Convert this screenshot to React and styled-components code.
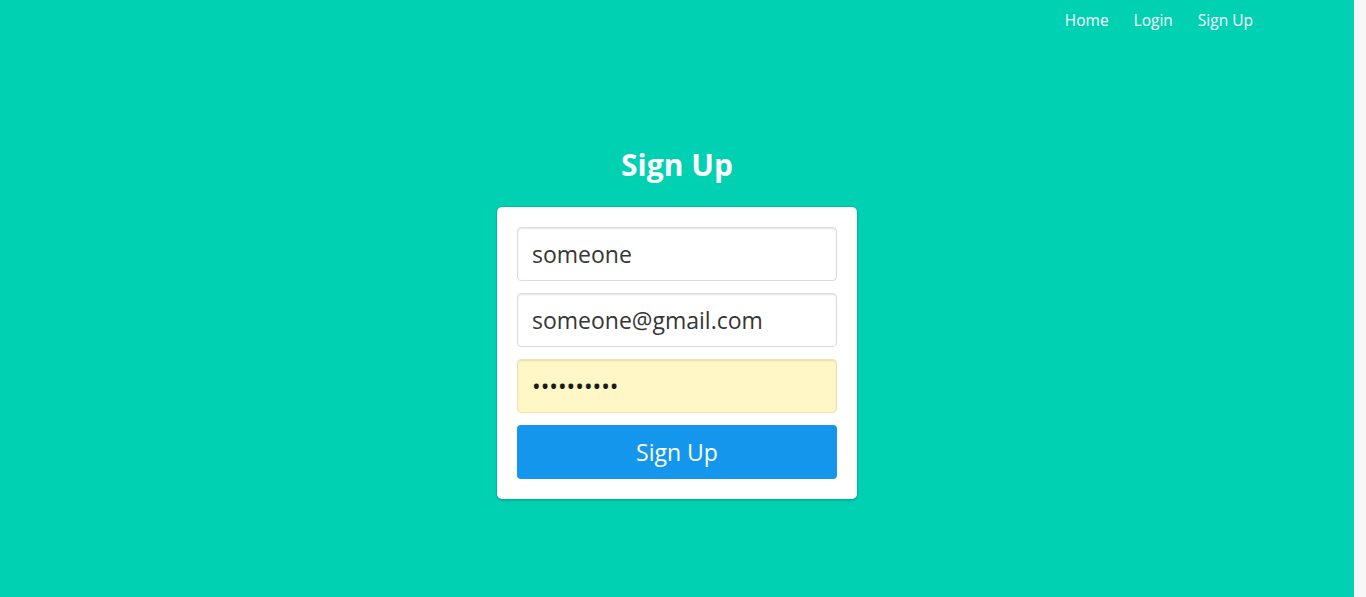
import React from "react";
import styled, { createGlobalStyle } from "styled-components";

const GlobalStyle = createGlobalStyle`
  html, body {
    margin: 0;
    padding: 0;
    height: 100%;
    background: #f7f7f7;
    font-family: "Open Sans", "DejaVu Sans", sans-serif;
  }
  #root {
    height: 100%;
  }
`;

const Page = styled.div`
  display: flex;
  height: 597px;
`;

const Hero = styled.section`
  flex: 1;
  background: #00d1b2;
  display: flex;
  flex-direction: column;
`;

const Gutter = styled.div`
  width: 12px;
  background: #f7f7f7;
`;

const Nav = styled.nav`
  display: flex;
  justify-content: flex-end;
  gap: 25px;
  padding: 9px 101px 0 0;
  height: 32px;
  box-sizing: border-box;
`;

const NavLink = styled.a`
  color: #fff;
  font-size: 15.5px;
  line-height: 22px;
  text-decoration: none;
  cursor: pointer;
`;

const Body = styled.div`
  display: flex;
  flex-direction: column;
  align-items: center;
  padding-top: 112px;
`;

const Title = styled.h1`
  margin: 0 0 21px;
  color: #fff;
  font-size: 30px;
  font-weight: 700;
  line-height: 42px;
`;

const Card = styled.form`
  width: 360px;
  box-sizing: border-box;
  background: #fff;
  border-radius: 5px;
  padding: 20px;
  display: flex;
  flex-direction: column;
  gap: 12px;
  box-shadow: 0 2px 3px rgba(10, 10, 10, 0.1), 0 0 0 1px rgba(10, 10, 10, 0.1);
`;

const Input = styled.input`
  height: 54px;
  box-sizing: border-box;
  width: 100%;
  border: 1px solid ${(p) => (p.$filled ? "#f3e2b0" : "#dbdbdb")};
  background: ${(p) => (p.$filled ? "#fff7c5" : "#fff")};
  border-radius: 4px;
  box-shadow: inset 0 1px 2px rgba(10, 10, 10, 0.1);
  padding: 0 14px;
  font-family: "Open Sans", "DejaVu Sans", sans-serif;
  font-size: 23px;
  color: ${(p) => (p.$filled ? "#1a1a1a" : "#363636")};
  outline: none;
`;

const Button = styled.button`
  height: 54px;
  border: none;
  border-radius: 4px;
  background: #1496ed;
  color: #fff;
  font-family: "Open Sans", "DejaVu Sans", sans-serif;
  font-size: 23px;
  cursor: pointer;
`;

export default function App() {
  return (
    <>
      <GlobalStyle />
      <Page>
        <Hero>
          <Nav>
            <NavLink>Home</NavLink>
            <NavLink>Login</NavLink>
            <NavLink>Sign Up</NavLink>
          </Nav>
          <Body>
            <Title>Sign Up</Title>
            <Card onSubmit={(e) => e.preventDefault()}>
              <Input type="text" defaultValue="someone" />
              <Input type="email" defaultValue="someone@gmail.com" />
              <Input type="password" defaultValue="abcdefghij" $filled />
              <Button type="submit">Sign Up</Button>
            </Card>
          </Body>
        </Hero>
        <Gutter />
      </Page>
    </>
  );
}
